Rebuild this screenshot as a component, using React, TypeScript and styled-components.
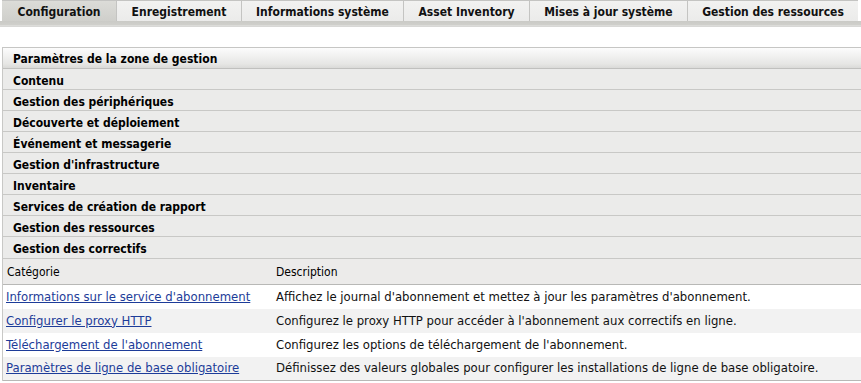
import React from 'react'
import styled, { createGlobalStyle } from 'styled-components'

const GlobalStyle = createGlobalStyle`
  body {
    margin: 0;
    background: #ffffff;
    font-family: "DejaVu Sans Condensed", "DejaVu Sans", sans-serif;
    font-stretch: condensed;
    color: #000;
  }
`

type Tab = { label: string; width: number; active?: boolean }

const tabs: Tab[] = [
  { label: 'Configuration', width: 114, active: true },
  { label: 'Enregistrement', width: 125 },
  { label: 'Informations système', width: 162 },
  { label: 'Asset Inventory', width: 126 },
  { label: 'Mises à jour système', width: 158 },
  { label: 'Gestion des ressources', width: 171 },
]

const sections = [
  'Contenu',
  'Gestion des périphériques',
  'Découverte et déploiement',
  'Événement et messagerie',
  "Gestion d'infrastructure",
  'Inventaire',
  'Services de création de rapport',
  'Gestion des ressources',
  'Gestion des correctifs',
]

const rows = [
  {
    name: "Informations sur le service d'abonnement",
    desc: "Affichez le journal d'abonnement et mettez à jour les paramètres d'abonnement.",
  },
  {
    name: 'Configurer le proxy HTTP',
    desc: "Configurez le proxy HTTP pour accéder à l'abonnement aux correctifs en ligne.",
  },
  {
    name: "Téléchargement de l'abonnement",
    desc: "Configurez les options de téléchargement de l'abonnement.",
  },
  {
    name: 'Paramètres de ligne de base obligatoire',
    desc: 'Définissez des valeurs globales pour configurer les installations de ligne de base obligatoire.',
  },
]

export default function App(): JSX.Element {
  return (
    <>
      <GlobalStyle />
      <Page>
        <TabBar>
          <TabRow>
            {tabs.map((t) => (
              <TabItem key={t.label} $width={t.width} $active={!!t.active}>
                {t.label}
              </TabItem>
            ))}
          </TabRow>
          <TabStrip />
        </TabBar>

        <Panel>
          <PanelHeader>Paramètres de la zone de gestion</PanelHeader>
          {sections.map((s) => (
            <SectionRow key={s}>{s}</SectionRow>
          ))}
          <Table>
            <thead>
              <tr>
                <HeadCell $first>Catégorie</HeadCell>
                <HeadCell>Description</HeadCell>
              </tr>
            </thead>
            <tbody>
              {rows.map((r, i) => (
                <BodyRow key={r.name} $odd={i % 2 === 1}>
                  <NameCell>
                    <Link href="#">{r.name}</Link>
                  </NameCell>
                  <DescCell>{r.desc}</DescCell>
                </BodyRow>
              ))}
            </tbody>
          </Table>
        </Panel>
      </Page>
    </>
  )
}

const Page = styled.div`
  width: 861px;
`

const TabBar = styled.div`
  display: flex;
  flex-direction: column;
  height: 27px;
`

const TabRow = styled.div`
  display: flex;
  height: 21px;
  padding-left: 2px;
`

const TabItem = styled.div<{ $width: number; $active: boolean }>`
  width: ${(p) => p.$width}px;
  box-sizing: border-box;
  display: flex;
  align-items: center;
  justify-content: center;
  font-size: 12px;
  font-weight: bold;
  color: #111;
  border-top: 1px solid #c4c4c2;
  border-left: ${(p) => (p.$active ? 'none' : '1px solid #c4c4c2')};
  background: ${(p) =>
    p.$active ? 'linear-gradient(#dcdcd8, #cfcfcb)' : 'linear-gradient(#f2f2f1, #ebebea)'};
  padding-top: 1px;
`

const TabStrip = styled.div`
  height: 6px;
  background: linear-gradient(#cacac6, #cfcfcb 70%, #e2e2e0);
  border-bottom: 1px solid #d8d8d6;
  box-sizing: border-box;
`

const Panel = styled.div`
  margin-top: 20px;
  margin-left: 2px;
  border-left: 1px solid #c8c8c6;
`

const PanelHeader = styled.div`
  height: 22px;
  box-sizing: border-box;
  display: flex;
  align-items: center;
  padding: 2px 0 0 10px;
  font-size: 12px;
  font-weight: bold;
  border-top: 1px solid #c6c6c4;
  background: linear-gradient(#fcfcfc, #e6e6e4 80%, #dadad8);
  border-bottom: 1px solid #c0c0be;
`

const SectionRow = styled.div`
  height: 21px;
  box-sizing: border-box;
  display: flex;
  align-items: center;
  padding: 3px 0 0 10px;
  font-size: 12px;
  font-weight: bold;
  background: #ebebea;
  border-bottom: 1px solid #c8c8c6;
  &:last-of-type {
    border-bottom: none;
  }
`

const Table = styled.table`
  width: 100%;
  border-collapse: collapse;
  font-size: 13px;
  border-top: 1px solid #c8c8c6;
  border-bottom: 1px solid #b8b8b6;
`

const HeadCell = styled.th<{ $first?: boolean }>`
  height: 25px;
  text-align: left;
  font-weight: normal;
  font-size: 12px;
  background: #ecebea;
  border-bottom: 1px solid #b8b8b6;
  padding: 0 0 0 ${(p) => (p.$first ? '4px' : '0')};
  width: ${(p) => (p.$first ? '269px' : 'auto')};
`

const BodyRow = styled.tr<{ $odd: boolean }>`
  height: 24px;
  background: ${(p) => (p.$odd ? '#f2f2f2' : '#ffffff')};
`

const NameCell = styled.td`
  padding: 0 0 1px 3px;
`

const DescCell = styled.td`
  padding: 0 0 1px 0;
  color: #111;
`

const Link = styled.a`
  color: #1d3c99;
  text-decoration: underline;
`
